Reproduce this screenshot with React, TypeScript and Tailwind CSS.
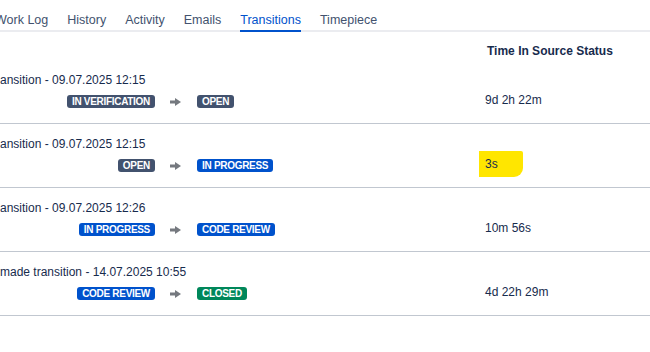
import React from "react";

type Status = "dark" | "blue" | "green";

const lozengeClass: Record<Status, string> = {
  dark: "bg-[#42526e]",
  blue: "bg-[#0052cc]",
  green: "bg-[#00875a]",
};

function Lozenge({ label, kind }: { label: string; kind: Status }) {
  return (
    <span
      className={`inline-flex h-[13px] items-center rounded-[3px] px-[5px] text-[10px] font-bold uppercase leading-[13px] tracking-[-0.3px] text-white ${lozengeClass[kind]}`}
    >
      {label}
    </span>
  );
}

function Arrow() {
  return (
    <svg width="11" height="8" viewBox="0 0 11 8" className="block">
      <rect x="0" y="2.5" width="6" height="3" fill="#75797f" />
      <path d="M5 0 L11 4 L5 8 Z" fill="#75797f" />
    </svg>
  );
}

type Row = {
  text: string;
  from: [string, Status];
  to: [string, Status];
  time: string;
  highlight?: boolean;
};

const rows: Row[] = [
  {
    text: "ansition - 09.07.2025 12:15",
    from: ["In Verification", "dark"],
    to: ["Open", "dark"],
    time: "9d 2h 22m",
  },
  {
    text: "ansition - 09.07.2025 12:15",
    from: ["Open", "dark"],
    to: ["In Progress", "blue"],
    time: "3s",
    highlight: true,
  },
  {
    text: "ansition - 09.07.2025 12:26",
    from: ["In Progress", "blue"],
    to: ["Code Review", "blue"],
    time: "10m 56s",
  },
  {
    text: "made transition - 14.07.2025 10:55",
    from: ["Code Review", "blue"],
    to: ["Closed", "green"],
    time: "4d 22h 29m",
  },
];

const tabs = ["Work Log", "History", "Activity", "Emails", "Transitions", "Timepiece"];

export default function App() {
  return (
    <div
      className="h-[352px] w-[650px] overflow-hidden bg-white text-[12px] leading-[16px] text-[#172b4d]"
      style={{ fontFamily: '"Liberation Sans", Arial, sans-serif' }}
    >
      {/* Tabs */}
      <div className="flex h-[32px] gap-[19px] border-b-2 border-[#ebecf0]">
        {tabs.map((t, i) => {
          const active = t === "Transitions";
          return (
            <div
              key={t}
              className={`-mb-[2px] h-[32px] whitespace-nowrap border-b-2 pt-[12px] text-[12.5px] leading-[16px] ${
                i === 0 ? "-ml-[5px]" : ""
              } ${active ? "border-[#0052cc] text-[#0052cc]" : "border-transparent text-[#42526e]"}`}
            >
              {t}
            </div>
          );
        })}
      </div>

      {/* Header */}
      <div className="flex h-[27px] pt-[11px]">
        <div className="w-[487px] shrink-0" />
        <div className="font-bold">Time In Source Status</div>
      </div>

      {/* Rows */}
      <div className="border-t border-transparent">
        {rows.map((r, i) => (
          <div key={i} className="flex h-[64px] border-b border-[#c1c7d0]">
            <div className="w-[485px] shrink-0 pt-[12px]">
              <div className="whitespace-nowrap">{r.text}</div>
              <div className="mt-[7px] flex items-center">
                <div className="flex w-[155px] shrink-0 justify-end">
                  <Lozenge label={r.from[0]} kind={r.from[1]} />
                </div>
                <div className="ml-[15px] mr-[16px] w-[11px] shrink-0">
                  <Arrow />
                </div>
                <Lozenge label={r.to[0]} kind={r.to[1]} />
              </div>
            </div>
            <div className="pt-[32px]">
              {r.highlight ? (
                <span className="-ml-[6px] -mt-[5px] block h-[26px] w-[44px] rounded-br-[9px] rounded-tr-[2px] bg-[#ffe600] pl-[6px] pt-[5px]">
                  {r.time}
                </span>
              ) : (
                r.time
              )}
            </div>
          </div>
        ))}
      </div>
    </div>
  );
}
